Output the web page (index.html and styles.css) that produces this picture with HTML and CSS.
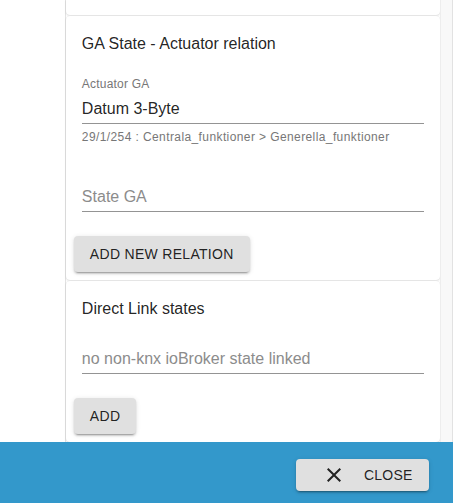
FILE: index.html
```html
<!DOCTYPE html>
<html>
<head>
  <title>GA Relations</title>
  <link rel="stylesheet" href="styles.css">
</head>
<body>
  <div class="dialog">
    <div class="dialog-body">
      <div class="gutter"></div>
      <div class="list">
        <div class="card card-top"></div>

        <div class="card">
          <div class="card-content">
            <div class="card-title">GA State - Actuator relation</div>
            <div class="field">
              <div class="field-label">Actuator GA</div>
              <div class="field-input">Datum 3-Byte</div>
              <div class="field-helper">29/1/254 : Centrala_funktioner &gt; Generella_funktioner</div>
            </div>
            <div class="field field-next">
              <div class="field-label"></div>
              <div class="field-input placeholder">State GA</div>
            </div>
          </div>
          <div class="card-actions">
            <button type="button" class="btn">Add new relation</button>
          </div>
        </div>

        <div class="card card-links">
          <div class="card-content">
            <div class="card-title">Direct Link states</div>
            <div class="field field-plain">
              <div class="field-input placeholder">no non-knx ioBroker state linked</div>
            </div>
          </div>
          <div class="card-actions">
            <button type="button" class="btn">Add</button>
          </div>
        </div>
      </div>
      <div class="track"></div>
    </div>
    <div class="dialog-footer">
      <button type="button" class="btn btn-close">
        <svg class="close-icon" viewBox="0 0 24 24" width="24" height="24">
          <path d="M19 6.41 17.59 5 12 10.59 6.41 5 5 6.41 10.59 12 5 17.59 6.41 19 12 13.41 17.59 19 19 17.59 13.41 12z" fill="#222"/>
        </svg>
        Close
      </button>
    </div>
  </div>
</body>
</html>
```

FILE: styles.css
```css
body {
  margin: 0;
  padding: 0;
  background-color: #fff;
  font-family: "Liberation Sans", Arial, sans-serif;
  color: rgba(0,0,0,0.87);
}
.dialog {
  width: 453px;
  height: 503px;
  display: flex;
  flex-direction: column;
}
.dialog-body {
  flex: 1;
  display: flex;
  overflow: hidden;
}
.gutter {
  width: 65px;
  border-right: 1px solid #e2e2e2;
}
.list {
  width: 375px;
  display: flex;
  flex-direction: column;
  gap: 1px;
}
.track {
  width: 11px;
  background-color: #f8f8f8;
  border-left: 1px solid #ededed;
  border-right: 1px solid #e2e2e2;
}
.card {
  background-color: #fff;
  border-radius: 4px;
  flex-shrink: 0;
  box-shadow: 0px 1px 2px 0px rgba(0,0,0,0.10), 0px 0px 1px 0px rgba(0,0,0,0.12);
}
.card-top {
  height: 15px;
  border-radius: 0 0 4px 4px;
}
.card-content {
  padding: 16px 16px 24px 16px;
}
.card-title {
  font-size: 16px;
  line-height: 24px;
}
.field {
  margin-top: 20px;
}
.field-next {
  margin-top: 19px;
}
.field-label {
  font-size: 12px;
  line-height: 16px;
  height: 16px;
  color: #777;
  letter-spacing: 0.2px;
}
.field-input {
  font-size: 16px;
  line-height: 24px;
  margin-top: 5px;
  padding-bottom: 2px;
  border-bottom: 1px solid #949494;
}
.field-input.placeholder {
  color: #8c8c8c;
}
.field-helper {
  font-size: 12px;
  line-height: 16px;
  margin-top: 5px;
  color: #777;
  letter-spacing: 0.4px;
}
.card-links .field-plain {
  margin-top: 26px;
}
.card-actions {
  padding: 0 8px 8px 8px;
  display: flex;
}
.btn {
  height: 36px;
  padding: 0 16px;
  font-family: "Liberation Sans", Arial, sans-serif;
  font-size: 14px;
  letter-spacing: 0.3px;
  text-transform: uppercase;
  color: rgba(0,0,0,0.87);
  background-color: #e0e0e0;
  border: none;
  border-radius: 4px;
  box-shadow: 0px 3px 1px -2px rgba(0,0,0,0.2), 0px 2px 2px 0px rgba(0,0,0,0.14), 0px 1px 5px 0px rgba(0,0,0,0.12);
  cursor: pointer;
}
.dialog-footer {
  height: 61px;
  background-color: #3398cb;
  display: flex;
  justify-content: flex-end;
  align-items: flex-start;
  padding: 17px 24px 0 0;
  box-sizing: border-box;
}
.btn-close {
  height: 32px;
  width: 133px;
  padding: 0 0 0 26px;
  display: flex;
  align-items: center;
  letter-spacing: 0.2px;
}
.close-icon {
  margin-right: 18px;
}
```
